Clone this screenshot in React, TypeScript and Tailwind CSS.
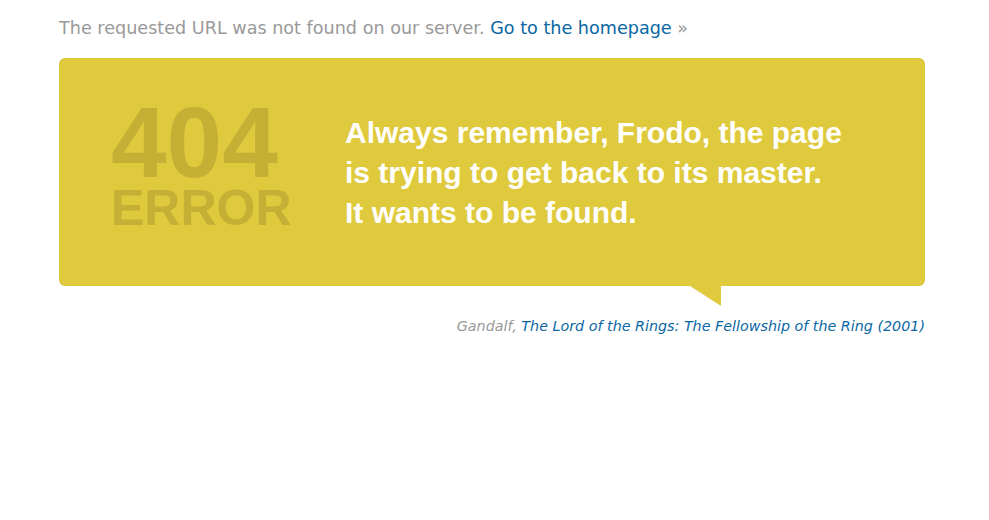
export default function App() {
  return (
    <div className="min-h-[520px] w-full bg-white font-['DejaVu_Sans',sans-serif]">
      <div className="pl-[59px] pr-[64px] pt-[16px]">
        <p className="text-[17.6px] leading-[24px] text-[#999999]">
          The requested URL was not found on our server.{" "}
          <a href="#" className="text-[#0a67a3]">
            Go to the homepage
          </a>{" "}
          »
        </p>

        <div className="relative mt-[18px] flex h-[228px] items-start rounded-[6px] bg-[#dfca3d]">
          <div className="ml-[52px] mt-[41px] w-[234px] font-['Liberation_Sans',Arial,sans-serif] font-bold text-[#c4b035]">
            <div className="text-[100px] leading-[86px]">404</div>
            <div className="text-[50px] leading-[47px]">ERROR</div>
          </div>
          <p className="mt-[55px] font-['Liberation_Sans',Arial,sans-serif] text-[30px] font-bold leading-[40px] text-white">
            Always remember, Frodo, the page
            <br />
            is trying to get back to its master.
            <br />
            It wants to be found.
          </p>
          {/* speech tail */}
          <svg
            className="absolute left-[631px] top-[228px]"
            width="31"
            height="20"
            viewBox="0 0 31 20"
          >
            <polygon points="0,0 31,0 31,20" fill="#dfca3d" />
          </svg>
        </div>

        <p className="mt-[30px] text-right text-[14.3px] italic leading-[20px]">
          <span className="text-[#999999]">Gandalf, </span>
          <span className="text-[#0a67a3]">
            The Lord of the Rings: The Fellowship of the Ring (2001)
          </span>
        </p>
      </div>
    </div>
  );
}
